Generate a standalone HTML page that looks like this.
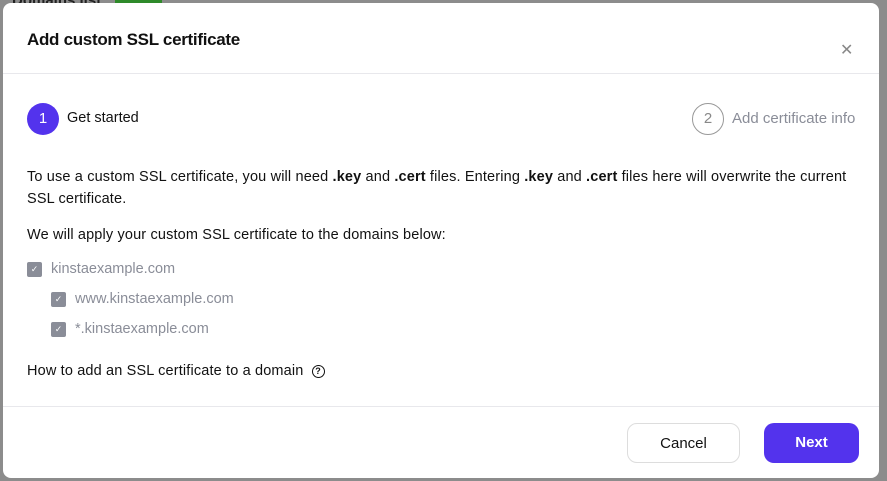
<!DOCTYPE html>
<html><head><style>
body{margin:0;width:887px;height:481px;background:#8c8c8c;font-family:"Liberation Sans",sans-serif;position:relative;overflow:hidden}
.bgt{position:absolute;left:12px;top:-8px;font-weight:bold;font-size:15px;color:#222}
.badge{position:absolute;left:115px;top:-4px;width:47px;height:8px;background:#2f8a2a}
.m{position:absolute;left:3px;top:3px;width:876px;height:475px;background:#fff;border-radius:8px}
.t{position:absolute;left:24px;top:27px;font-size:17px;font-weight:bold;color:#111;letter-spacing:-0.3px}
.x{position:absolute;left:837px;top:37px;font-size:16px;color:#888}
.hr{position:absolute;left:0;right:0;height:1px;background:#e8e8ec}
.c1{position:absolute;left:24px;top:100px;width:32px;height:32px;border-radius:50%;background:#5333ed;color:#fff;font-size:15px;text-align:center;line-height:32px}
.c2{position:absolute;left:689px;top:100px;width:30px;height:30px;border-radius:50%;border:1px solid #999;color:#888;font-size:15px;text-align:center;line-height:30px}
.s{position:absolute;font-size:14.5px}
p{position:absolute;left:24px;margin:0;font-size:14.5px;color:#111;line-height:22px;width:830px;letter-spacing:0.15px}
.cb{position:absolute;width:15px;height:15px;background:#8a8d98;border-radius:2px;color:#fff;font-size:9px;text-align:center;line-height:15px}
.d{position:absolute;font-size:14.5px;color:#8a8d98}
.btn{position:absolute;top:420px;height:40px;border-radius:10px;font-size:15px;text-align:center;line-height:40px;box-sizing:border-box}
</style></head><body>
<div class="bgt">Domains list</div><div class="badge"></div>
<div class="m">
<div class="t">Add custom SSL certificate</div>
<div class="x">✕</div>
<div class="hr" style="top:70px"></div>
<div class="c1">1</div>
<div class="s" style="left:64px;top:107px;color:#111">Get started</div>
<div class="c2">2</div>
<div class="s" style="left:729px;top:107px;color:#8a8d98;font-size:15px">Add certificate info</div>
<p style="top:163px">To use a custom SSL certificate, you will need <b>.key</b> and <b>.cert</b> files. Entering <b>.key</b> and <b>.cert</b> files here will overwrite the current SSL certificate.</p>
<p style="top:221px">We will apply your custom SSL certificate to the domains below:</p>
<div class="cb" style="left:24px;top:259px">✓</div><div class="d" style="left:48px;top:258px">kinstaexample.com</div>
<div class="cb" style="left:48px;top:289px">✓</div><div class="d" style="left:72px;top:288px">www.kinstaexample.com</div>
<div class="cb" style="left:48px;top:319px">✓</div><div class="d" style="left:72px;top:318px">*.kinstaexample.com</div>
<p style="top:357px">How to add an SSL certificate to a domain <span style="display:inline-block;width:11px;height:11px;border:1.5px solid #111;border-radius:50%;font-size:9px;line-height:11px;text-align:center;font-weight:bold;margin-left:4px;vertical-align:1px">?</span></p>
<div class="hr" style="top:403px"></div>
<div class="btn" style="left:624px;width:113px;border:1px solid #ddd;color:#111">Cancel</div>
<div class="btn" style="left:761px;width:95px;background:#5333ed;color:#fff;font-weight:bold">Next</div>
</div>
</body></html>
